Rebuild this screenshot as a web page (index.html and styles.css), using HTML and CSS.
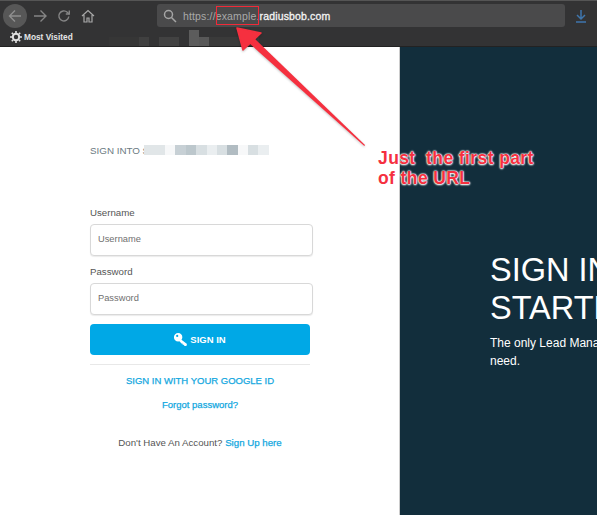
FILE: index.html
```html
<!DOCTYPE html>
<html lang="en">
<head>
    <meta charset="UTF-8">
    <title>Sign In</title>
    <link rel="stylesheet" href="styles.css">
</head>
<body>
    <div class="browser">
        <div class="toolbar">
            <span class="back-btn">
                <svg width="16" height="16" viewBox="0 0 16 16" fill="none" stroke="#8f8f8f" stroke-width="1.4"><path d="M14 8H2.500M8 2.500 2.500 8 8 13.500"/></svg>
            </span>
            <svg class="tool-icon forward" width="16" height="16" viewBox="0 0 16 16" fill="none" stroke="#858585" stroke-width="1.400"><path d="M2 8h12M8.500 2.500 14 8l-5.500 5.500"/></svg>
            <svg class="tool-icon reload" width="14" height="14" viewBox="0 0 14 14" fill="none" stroke="#858585" stroke-width="1.400"><path d="M11.800 7.500A5 5 0 1 1 10.300 3.300L12 5"/><path d="M12.300 1.500V5H8.800"/></svg>
            <svg class="tool-icon home" width="14" height="14" viewBox="0 0 14 14" fill="none" stroke="#a8a8a8" stroke-width="1.200"><path d="M1 7 7 1.500 13 7M3 6v7h3V9h2v4h3V6"/></svg>
            <div class="url-bar">
                <svg width="14" height="14" viewBox="0 0 14 14" fill="none" stroke="#a5a5a5" stroke-width="1.500"><circle cx="5.500" cy="5.500" r="4"/><path d="M8.500 8.500 13 13"/></svg>
                <span class="url-text"><span class="url-dim">https://example.</span>radiusbob.com</span>
            </div>
            <svg class="download" width="14" height="14" viewBox="0 0 14 14" fill="none" stroke="#3f76ad" stroke-width="1.500"><path d="M7 1v8.500M3 6l4 4 4-4M2 13h10"/></svg>
        </div>
        <div class="bookmarks">
            <svg width="12" height="12" viewBox="0 0 12 12" fill="none" stroke="#e0e0e0" stroke-width="2"><circle cx="6" cy="6" r="3.200"/><path stroke-width="1.600" d="M6 0v2M6 10v2M0 6h2M10 6h2M1.800 1.800l1.400 1.400M8.800 8.800l1.400 1.400M1.800 10.200l1.400-1.400M8.800 3.200l1.400-1.400"/></svg>
            <span>Most Visited</span>
            <div class="blur-strip">
                <i class="b1"></i><i class="b2"></i><i class="b0"></i><i class="b3"></i><i class="b0"></i><i class="b4"></i><i class="b5"></i><i class="b6"></i>
            </div>
        </div>
    </div>

    <div class="page">
        <div class="left-panel">
            <div class="login-box">
                <div class="sign-title">
                    <span>SIGN INTO S</span>
                    <div class="pixels">
                        <i class="p2"></i><i class="p2"></i><i class="p0"></i><i class="p4"></i><i class="p5"></i><i class="p3"></i><i class="p1"></i><i class="p3"></i><i class="p6"></i><i class="p0"></i><i class="p3"></i><i class="p1"></i>
                    </div>
                </div>
                <label class="field-label">Username</label>
                <input class="field" type="text" placeholder="Username">
                <label class="field-label">Password</label>
                <input class="field" type="password" placeholder="Password">
                <button class="sign-btn" type="button">
                    <svg width="13" height="13" viewBox="0 0 13 13" fill="#fff"><path d="M4.200 0a4.200 4.200 0 1 1-.1 8.400A4.200 4.200 0 0 1 4.200 0Zm-1 1.800a1.100 1.100 0 1 0 0 2.200 1.100 1.100 0 0 0 0-2.200Z" fill-rule="evenodd"/><path d="m6.500 6 6.500 5-.6 2h-1.800l-1-1.200-.9-.1-.3-1.100-1-.2-2.300-2.600Z"/></svg>
                    SIGN IN
                </button>
                <div class="divider"></div>
                <a class="google-link" href="#">SIGN IN WITH YOUR GOOGLE ID</a>
                <a class="forgot-link" href="#">Forgot password?</a>
                <p class="signup">Don't Have An Account? <a href="#">Sign Up here</a></p>
            </div>
        </div>
        <div class="right-panel">
            <h1>SIGN IN &amp;<br>STARTED</h1>
            <p>The only Lead Management tool you'll ever need.</p>
        </div>
    </div>

    <div class="annotation">
        <div class="red-box"></div>
        <svg class="arrow" width="200" height="150" viewBox="0 0 200 150">
            <path d="M14 17 19 12 130 119 129.300 120Z" fill="#f5303f"/>
            <path d="M2 2 26 7 8 24Z" fill="#f5303f" stroke="#f5303f" stroke-width="1.500" stroke-linejoin="round"/>
        </svg>
        <div class="note">Just&nbsp; the first part<br>of the URL</div>
    </div>
</body>
</html>
```

FILE: styles.css
```css
body {
    margin: 0;
    width: 597px;
    height: 515px;
    overflow: hidden;
    position: relative;
    font-family: "Liberation Sans", Arial, sans-serif;
    background-color: #fff;
}

.browser {
    background-color: #333334;
    border-top: 1px solid #555;
    height: 47px;
    box-sizing: border-box;
    border-bottom: 1px solid #222;
}

.toolbar {
    display: flex;
    align-items: center;
    height: 29px;
    padding-left: 3px;
}

.back-btn {
    width: 24px;
    height: 24px;
    border-radius: 50%;
    background-color: #575757;
    display: flex;
    align-items: center;
    justify-content: center;
}

.forward {
    margin-left: 5px;
}

.reload {
    margin-left: 9px;
}

.home {
    margin-left: 10px;
}

.url-bar {
    display: flex;
    align-items: center;
    width: 408px;
    height: 23px;
    margin-left: 62px;
    padding-left: 6px;
    box-sizing: border-box;
    background-color: #4a4a4b;
    border-radius: 3px;
}

.url-text {
    margin-left: 6px;
    font-size: 10.500px;
    color: #f4f4f4;
    letter-spacing: 0.150px;
    -webkit-text-stroke: 0.300px #f4f4f4;
}

.url-dim {
    color: #a9a9a9;
    -webkit-text-stroke: 0;
}

.download {
    margin-left: 9px;
}

.bookmarks {
    display: flex;
    align-items: center;
    gap: 2px;
    height: 16px;
    box-sizing: border-box;
    padding: 0 0 2px 10px;
    font-size: 8.300px;
    font-weight: bold;
    color: #e4e4e4;
}

.blur-strip {
    display: flex;
    align-self: flex-end;
    align-items: flex-end;
    margin: 0 0 -2px 34px;
}

.blur-strip i {
    display: block;
    height: 9px;
    width: 10px;
}

.blur-strip .b0 { background-color: #333334; }
.blur-strip .b1 { width: 30px; background-color: #363636; }
.blur-strip .b2 { background-color: #404040; }
.blur-strip .b3 { width: 20px; background-color: #424242; }
.blur-strip .b4 { height: 16px; background-color: #5c5c5c; }
.blur-strip .b5 { background-color: #585858; }
.blur-strip .b6 { width: 50px; background-color: #3a3a3a; }

.page {
    display: flex;
    height: 468px;
}

.left-panel {
    width: 400px;
    background-color: #fff;
    border-right: 1px solid #ccc;
    box-sizing: border-box;
}

.login-box {
    width: 223px;
    margin-left: 90px;
    padding-top: 97px;
    display: flex;
    flex-direction: column;
}

.sign-title {
    display: flex;
    align-items: center;
    height: 12px;
    font-size: 9.800px;
    color: #6c7a82;
    margin-bottom: 51px;
}

.pixels {
    display: flex;
    margin-left: -5px;
}

.pixels i {
    display: block;
    width: 10.400px;
    height: 10px;
}

.pixels .p0 { background-color: #f7f8f9; }
.pixels .p1 { background-color: #eaeef0; }
.pixels .p2 { background-color: #e1e6e8; }
.pixels .p3 { background-color: #d8dfe2; }
.pixels .p4 { background-color: #c7d0d5; }
.pixels .p5 { background-color: #bcc7cc; }
.pixels .p6 { background-color: #b1bcc2; }

.field-label {
    font-size: 9.700px;
    line-height: 12px;
    color: #555;
    margin-bottom: 5px;
}

.field {
    height: 32px;
    box-sizing: border-box;
    border: 1px solid #d8d8d8;
    border-radius: 4px;
    padding: 0 7px 2px;
    margin-bottom: 10px;
    font-family: inherit;
    font-size: 9.300px;
    box-shadow: 0 1px 1px rgba(0, 0, 0, 0.08);
}

.field::placeholder {
    color: #6f6f6f;
}

.sign-btn {
    width: 220px;
    height: 31px;
    margin-top: -1px;
    border: none;
    border-radius: 4px;
    background-color: #00a8e6;
    color: #fff;
    font-family: inherit;
    font-size: 9.500px;
    font-weight: bold;
    display: flex;
    align-items: center;
    justify-content: center;
    gap: 3px;
}

.divider {
    width: 220px;
    height: 1px;
    background-color: #e8e8e8;
    margin-top: 9px;
}

.google-link,
.forgot-link {
    width: 220px;
    text-align: center;
    text-decoration: none;
    color: #12a7e0;
    font-size: 9.500px;
    -webkit-text-stroke: 0.250px #12a7e0;
}

.google-link {
    margin-top: 10px;
}

.forgot-link {
    margin-top: 13px;
}

.signup {
    width: 220px;
    text-align: center;
    margin: 27px 0 0;
    font-size: 9.700px;
    color: #555;
}

.signup a {
    color: #12a7e0;
    text-decoration: none;
    -webkit-text-stroke: 0.250px #12a7e0;
}

.right-panel {
    flex: 1;
    background-color: #122e3c;
    color: #fff;
    padding: 204px 0 0 90px;
    overflow: hidden;
}

.right-panel h1 {
    margin: 0;
    width: 300px;
    font-size: 32.500px;
    line-height: 38px;
    font-weight: normal;
}

.right-panel p {
    margin: 7px 0 0;
    width: 240px;
    font-size: 12px;
    line-height: 18px;
}

/* red markup drawn over the screenshot */
.annotation {
    position: absolute;
    top: 0;
    left: 0;
}

.red-box {
    position: absolute;
    left: 216px;
    top: 6px;
    width: 41px;
    height: 17px;
    border: 1.500px solid #f02a38;
}

.arrow {
    position: absolute;
    left: 235px;
    top: 26px;
    filter: drop-shadow(0 1px 1px rgba(0, 0, 0, 0.25));
}

.note {
    position: absolute;
    left: 378px;
    top: 148px;
    width: 200px;
    font-size: 17.500px;
    letter-spacing: 0.400px;
    line-height: 20px;
    font-weight: bold;
    color: #f5303f;
    text-shadow: 0 0 2px #fff, 0 0 2px #fff, 0 1px 2px #fff, 0 0 1px #fff;
}
```
